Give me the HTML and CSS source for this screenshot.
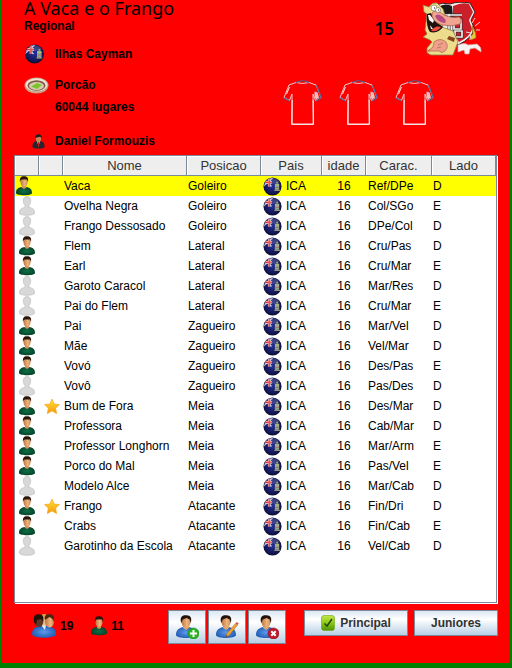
FILE: index.html
```html
<!DOCTYPE html>
<html lang="pt">
<head>
<meta charset="utf-8">
<title>A Vaca e o Frango</title>
<link rel="stylesheet" href="styles.css">
</head>
<body>
<svg class="defs" aria-hidden="true">
  <defs>
    <radialGradient id="navy" cx=".5" cy=".45" r=".55"><stop offset="0" stop-color="#26309a"/><stop offset=".7" stop-color="#15195e"/><stop offset="1" stop-color="#0b0d30"/></radialGradient>
    <radialGradient id="green"><stop offset="0" stop-color="#0f7048"/><stop offset="1" stop-color="#06462a"/></radialGradient>
    <radialGradient id="blue"><stop offset="0" stop-color="#5b9bea"/><stop offset="1" stop-color="#2560b8"/></radialGradient>
    <linearGradient id="lime" x2="0" y2="1"><stop offset="0" stop-color="#c3e84a"/><stop offset=".5" stop-color="#8cc818"/><stop offset="1" stop-color="#4e9408"/></linearGradient>
    <linearGradient id="gold" x2="0" y2="1"><stop offset="0" stop-color="#ffe23c"/><stop offset="1" stop-color="#f79a08"/></linearGradient>
    <linearGradient id="skin" x2="1" y2="0"><stop offset="0" stop-color="#b87442"/><stop offset=".6" stop-color="#f0b57c"/><stop offset="1" stop-color="#c98a55"/></linearGradient>
    <clipPath id="disc"><circle cx="10" cy="10" r="9"/></clipPath>
    <symbol id="flag" viewBox="0 0 20 20">
      <circle cx="10" cy="10" r="9.5" fill="url(#navy)"/>
      <g clip-path="url(#disc)">
        <path d="M1 2l8 8M10 1L0 10" stroke="#b9bddd" stroke-width="1.500"/>
        <path d="M0 5.500h9.500M6.500 0v10" stroke="#f4dede" stroke-width="2.600"/>
        <path d="M0 5.500h9.500M6.500 1v9" stroke="#e03030" stroke-width="1.400"/>
        <path d="M12.500 7h4.500v6.500h-4.500z" fill="#86ab98"/>
        <path d="M13 8.500h4M12 14h6" stroke="#c9b770"/>
        <path d="M13 11h4" stroke="#b96a5c"/>
        <path d="M14 5h2v2h-2z" fill="#8f9a6c"/>
        <ellipse cx="10" cy="4" rx="7" ry="3" fill="#fff" opacity=".16"/>
      </g>
    </symbol>
    <symbol id="player" viewBox="0 0 16 20">
      <path d="M0 17c0-4 2-5 5-6l3 1 3-1c3 1 5 2 5 6 0 3-16 3-16 0z" fill="url(#green)"/>
      <path d="M6 8h4v4l-2 1-2-1z" fill="#d09058"/>
      <ellipse cx="8" cy="6" rx="3.5" ry="4.6" fill="url(#skin)"/>
      <path d="M4 6C3.400 2 5 0 8 .2c3.500-.2 4.700 2 4 5.800l-1-2.500H6L4.800 4z" fill="#2a160c"/>
    </symbol>
    <symbol id="ghost" viewBox="0 0 16 20">
      <path d="M.5 17c0-4 2-5 5.500-5.500V9.500C3.500 7 3.500.5 8 .5s4.500 6.500 2 9v2c3.500.5 5.500 1.500 5.500 5.500 0 3-15 3-15 0z" fill="#d8d8d8" stroke="#bdbdbd" stroke-width=".7"/>
    </symbol>
    <symbol id="star" viewBox="0 0 16 16">
      <path d="M8 .6l2.200 4.900 5.300.6-3.900 3.600 1 5.400L8 12.400l-4.700 2.700 1-5.400L.5 6.100l5.300-.6z" fill="url(#gold)" stroke="#f0a010" stroke-width=".6"/>
    </symbol>
    <symbol id="person" viewBox="0 0 24 24">
      <path d="M1 20c0-5 3-7 7-8l3 2 3-2c4 1 7 3 7 8 0 4-20 4-20 0z" fill="url(#blue)"/>
      <path d="M8 9h6v4l-3 2-3-2z" fill="#e0a470"/>
      <ellipse cx="11" cy="7" rx="4.500" ry="5.500" fill="url(#skin)"/>
      <path d="M6.300 8C4.500 2.500 7 0 11 .3 15.500 0 17.300 3 15.700 8l-1-3.500-3-1.500-4 1.500z" fill="#24130b"/>
    </symbol>
    <symbol id="shirt" viewBox="0 0 39 46">
      <path d="M13 2.500L6 5 1 17.500l5.500 3L9 14v7L8.500 44.500h22L30 21v-7l2.500 6.500 5.500-3L33 5l-7-2.500q-6.500 2-13 0z" fill="#f00" stroke="#e9c9cc" stroke-width="1"/>
      <path d="M13 2.500q6.500-3.500 13 0M.8 18L6.500 21M33.500 5.500l4.800 12-5 3.500" fill="none" stroke="#4a5f96" stroke-width="1.200"/>
      <path d="M31.500 11.500l3 1 1.500 5-3 2-1.500-3z" fill="#eee0e2" opacity=".85"/>
      <path d="M9.200 20v24h21V20M6.500 7l-3 7" fill="none" stroke="#fff" stroke-width=".9"/>
    </symbol>
  </defs>
</svg>

<header class="club">
  <div class="info">
    <h1>A Vaca e o Frango</h1>
    <p class="line">Regional</p>
    <p class="line country"><span class="ico"><svg width="21" height="20"><use href="#flag"/></svg></span>Ilhas Cayman</p>
    <p class="line stadium"><span class="ico"><svg width="25" height="17" viewBox="0 0 25 17"><ellipse cx="12.500" cy="8.500" rx="12" ry="8" fill="#c9a287"/><ellipse cx="12.500" cy="7.800" rx="11" ry="6.500" fill="#f2e4d4"/><ellipse cx="12.500" cy="8.500" rx="9" ry="5.200" fill="#7b5e48"/><ellipse cx="12.500" cy="9" rx="7.500" ry="4" fill="#d9cbb2"/><path d="M7 9.500l6-3.500 5 2-5 4z" fill="#79c52a"/></svg></span>Porcão</p>
    <p class="line seats"><span class="ico"></span>60044 lugares</p>
    <p class="line manager"><span class="ico centered"><svg width="13" height="15" viewBox="0 0 13 15"><path d="M.5 13c0-4 1-5 4-6h4c3 1 4 2 4 6 0 2-12 2-12 0z" fill="#26262c"/><path d="M5 7h3l-1.500 5z" fill="#eee"/><path d="M6 8h1v5H6z" fill="#b22"/><ellipse cx="6.500" cy="4.500" rx="2.600" ry="3.500" fill="#c98558"/><path d="M3 4c0-5 7-5 7 0L8 2.800z" fill="#1c1c22"/></svg></span>Daniel Formouzis</p>
  </div>
  <div class="side">
    <div class="rank">
      <span class="pos">15</span>
      <svg width="61" height="54" viewBox="0 0 61 54" role="img" aria-label="Escudo">
        <path d="M14 3q6-3 14-1 8-3 20-1l5 9-4 8 3 8q-1 10-16 17Q20 36 18 20z" fill="#f4f0f0" stroke="#2b2325"/>
        <path d="M18 4q6-3 12 0l1 11-8-1z" fill="#1b1819"/>
        <path d="M31 4q9-4 16-2l4 8-4 8 3 9q-2 8-13 13-6-8-6-15z" fill="#cb1f29"/>
        <path d="M22 13h18M27 12v21h6M32 18h7v9h-7zM33 29h7v6h-7z" fill="none" stroke="#353032" stroke-width="3"/>
        <path d="M22 13h18M27 12v21h6M32 18h7v9h-7zM33 29h7v6h-7z" fill="none" stroke="#f0eded" stroke-width="1.700"/>
        <path d="M7 5l-6-2 1 7 3 2-2 16 2 4-4 3 7 3 2 2-5 6v5l4 2h22l5-13-5-11-11-4 4-9-3-9-6-6q-5-1-8 4z" fill="#ecdc8c" stroke="#8a7a46" stroke-width=".8"/>
        <path d="M5 12q-1 13 3 18 8 2 13-5l-8-6-4-8z" fill="#21100e"/>
        <path d="M6 13l1 5 4 3 1-3-4-5zM9 27l-1-4 3 4z" fill="#fff"/>
        <path d="M9 29q4-6 10-4-3 5-10 4z" fill="#ee4d3f"/>
        <path d="M10 11q4-5 12 2 8 4 15 2 4 3 1 7-8 3-18 1Q9 19 10 11z" fill="#efa58f" stroke="#a96354" stroke-width=".8"/>
        <path d="M13 14q3-4 9 2 3 3 1 5-7 0-10-7z" fill="#b74a83"/>
        <ellipse cx="12" cy="6" rx="3" ry="3" fill="#fff" stroke="#665" stroke-width=".6"/><ellipse cx="16" cy="8" rx="2.500" ry="2.500" fill="#fff" stroke="#665" stroke-width=".6"/>
        <path d="M12 6h1M16 8h1" stroke="#111"/>
        <path d="M12 40q6-5 12 0 3 5-1 9-3 3-6 0H6l5-4z" fill="#f0a08a" stroke="#b06c5a" stroke-width=".8"/>
        <path d="M16 43l5-2M15 46l4-1M8 47l-3 4" stroke="#b06c5a" stroke-width=".8"/>
        <path d="M27 34l6 2-1 4-7-3z" fill="#84451a"/>
        <path d="M36 43q7-3 10 0l9-1q5 3 4 8l-6-4-5 1-1 5h-4l-1-4-6 2z" fill="#f8f2f0" stroke="#cda7a3" stroke-width=".7"/>
        <path d="M50 24q5 7 4 12l-5 2-1-3 3-3z" fill="#e5cb3c" stroke="#8a6419" stroke-width=".7"/>
        <path d="M50 21l3-5M53 24l5-4M54 28l4 0M44 30l5 1-1 7" fill="none" stroke="#e8d8d8"/>
      </svg>
    </div>
    <div class="kits">
      <svg width="39" height="46"><use href="#shirt"/></svg>
      <svg width="39" height="46"><use href="#shirt"/></svg>
      <svg width="39" height="46"><use href="#shirt"/></svg>
    </div>
  </div>
</header>

<main class="panel">
  <table>
    <colgroup><col class="c-icon"><col class="c-icon"><col><col class="c-pos"><col class="c-country"><col class="c-age"><col class="c-traits"><col class="c-side"></colgroup>
    <thead>
      <tr><th></th><th></th><th>Nome</th><th>Posicao</th><th>Pais</th><th>idade</th><th>Carac.</th><th>Lado</th></tr>
    </thead>
    <tbody>
      <tr class="selected"><td><svg><use href="#player"/></svg></td><td></td><td>Vaca</td><td>Goleiro</td><td><span class="nat"><svg><use href="#flag"/></svg>ICA</span></td><td>16</td><td>Ref/DPe</td><td>D</td></tr>
      <tr><td><svg><use href="#ghost"/></svg></td><td></td><td>Ovelha Negra</td><td>Goleiro</td><td><span class="nat"><svg><use href="#flag"/></svg>ICA</span></td><td>16</td><td>Col/SGo</td><td>E</td></tr>
      <tr><td><svg><use href="#ghost"/></svg></td><td></td><td>Frango Dessosado</td><td>Goleiro</td><td><span class="nat"><svg><use href="#flag"/></svg>ICA</span></td><td>16</td><td>DPe/Col</td><td>D</td></tr>
      <tr><td><svg><use href="#player"/></svg></td><td></td><td>Flem</td><td>Lateral</td><td><span class="nat"><svg><use href="#flag"/></svg>ICA</span></td><td>16</td><td>Cru/Pas</td><td>D</td></tr>
      <tr><td><svg><use href="#player"/></svg></td><td></td><td>Earl</td><td>Lateral</td><td><span class="nat"><svg><use href="#flag"/></svg>ICA</span></td><td>16</td><td>Cru/Mar</td><td>E</td></tr>
      <tr><td><svg><use href="#ghost"/></svg></td><td></td><td>Garoto Caracol</td><td>Lateral</td><td><span class="nat"><svg><use href="#flag"/></svg>ICA</span></td><td>16</td><td>Mar/Res</td><td>D</td></tr>
      <tr><td><svg><use href="#ghost"/></svg></td><td></td><td>Pai do Flem</td><td>Lateral</td><td><span class="nat"><svg><use href="#flag"/></svg>ICA</span></td><td>16</td><td>Cru/Mar</td><td>E</td></tr>
      <tr><td><svg><use href="#player"/></svg></td><td></td><td>Pai</td><td>Zagueiro</td><td><span class="nat"><svg><use href="#flag"/></svg>ICA</span></td><td>16</td><td>Mar/Vel</td><td>D</td></tr>
      <tr><td><svg><use href="#player"/></svg></td><td></td><td>Mãe</td><td>Zagueiro</td><td><span class="nat"><svg><use href="#flag"/></svg>ICA</span></td><td>16</td><td>Vel/Mar</td><td>D</td></tr>
      <tr><td><svg><use href="#player"/></svg></td><td></td><td>Vovó</td><td>Zagueiro</td><td><span class="nat"><svg><use href="#flag"/></svg>ICA</span></td><td>16</td><td>Des/Pas</td><td>E</td></tr>
      <tr><td><svg><use href="#ghost"/></svg></td><td></td><td>Vovô</td><td>Zagueiro</td><td><span class="nat"><svg><use href="#flag"/></svg>ICA</span></td><td>16</td><td>Pas/Des</td><td>D</td></tr>
      <tr><td><svg><use href="#player"/></svg></td><td><svg><use href="#star"/></svg></td><td>Bum de Fora</td><td>Meia</td><td><span class="nat"><svg><use href="#flag"/></svg>ICA</span></td><td>16</td><td>Des/Mar</td><td>D</td></tr>
      <tr><td><svg><use href="#player"/></svg></td><td></td><td>Professora</td><td>Meia</td><td><span class="nat"><svg><use href="#flag"/></svg>ICA</span></td><td>16</td><td>Cab/Mar</td><td>D</td></tr>
      <tr><td><svg><use href="#player"/></svg></td><td></td><td>Professor Longhorn</td><td>Meia</td><td><span class="nat"><svg><use href="#flag"/></svg>ICA</span></td><td>16</td><td>Mar/Arm</td><td>E</td></tr>
      <tr><td><svg><use href="#player"/></svg></td><td></td><td>Porco do Mal</td><td>Meia</td><td><span class="nat"><svg><use href="#flag"/></svg>ICA</span></td><td>16</td><td>Pas/Vel</td><td>E</td></tr>
      <tr><td><svg><use href="#ghost"/></svg></td><td></td><td>Modelo Alce</td><td>Meia</td><td><span class="nat"><svg><use href="#flag"/></svg>ICA</span></td><td>16</td><td>Mar/Cab</td><td>D</td></tr>
      <tr><td><svg><use href="#player"/></svg></td><td><svg><use href="#star"/></svg></td><td>Frango</td><td>Atacante</td><td><span class="nat"><svg><use href="#flag"/></svg>ICA</span></td><td>16</td><td>Fin/Dri</td><td>D</td></tr>
      <tr><td><svg><use href="#player"/></svg></td><td></td><td>Crabs</td><td>Atacante</td><td><span class="nat"><svg><use href="#flag"/></svg>ICA</span></td><td>16</td><td>Fin/Cab</td><td>E</td></tr>
      <tr><td><svg><use href="#ghost"/></svg></td><td></td><td>Garotinho da Escola</td><td>Atacante</td><td><span class="nat"><svg><use href="#flag"/></svg>ICA</span></td><td>16</td><td>Vel/Cab</td><td>D</td></tr>
    </tbody>
  </table>
</main>

<footer>
  <div class="counts">
    <span class="count"><svg width="24" height="24" viewBox="0 0 24 24"><path d="M0 20c0-5 3-7 7-8h9c5 1 8 3 8 8 0 5-24 5-24 0z" fill="url(#blue)"/><path d="M9 11h5l-1 5z" fill="#dcebff"/><ellipse cx="12" cy="6" rx="4" ry="5.500" fill="#f0c08a"/><path d="M8 3c2-4 7-4 8 0l-3 2z" fill="#dca044"/><ellipse cx="7" cy="7" rx="4.500" ry="6" fill="#5e3824"/><path d="M2 8C1 2 3 0 7 .3c4 0 5 3 4 7L9 5 5 6 4 11z" fill="#21110b"/><ellipse cx="17.500" cy="7.500" rx="4.500" ry="6" fill="url(#skin)"/><path d="M13 6c-1-4 1-6 4-5.700C21 0 23 2 21.500 8l-1-3-3-2z" fill="#4a2612"/></svg>19</span>
    <span class="count"><svg width="16" height="20"><use href="#player"/></svg>11</span>
  </div>
  <div class="tools">
    <button class="tool" type="button" aria-label="Adicionar"><svg viewBox="0 0 24 24"><use href="#person" width="24" height="24"/><circle cx="18.500" cy="18.500" r="5.500" fill="#27b51d" stroke="#1c8a18" stroke-width=".6"/><path d="M18.500 15v7M15 18.500h7" stroke="#fff" stroke-width="2"/></svg></button>
    <button class="tool" type="button" aria-label="Editar"><svg viewBox="0 0 24 24"><use href="#person" width="24" height="24"/><path d="M11 22l1-3.500 8.500-10 2 1.500-8.500 10.500z" fill="#f3a52b" stroke="#a86412" stroke-width=".5"/><path d="M20.500 8.500l1.200-1.500 2 1.600-1.200 1.400z" fill="#d9534a"/><path d="M11 22l.5-1.700 1 .8z" fill="#222"/></svg></button>
    <button class="tool" type="button" aria-label="Remover"><svg viewBox="0 0 24 24"><use href="#person" width="24" height="24"/><circle cx="18.500" cy="18.500" r="5.500" fill="#c0182a" stroke="#8b101c" stroke-width=".6"/><path d="M16.300 16.300l4.400 4.400M20.700 16.300l-4.400 4.400" stroke="#fff" stroke-width="2"/></svg></button>
  </div>
  <div class="views">
    <button class="view main" type="button"><svg width="14" height="16" viewBox="0 0 14 16"><rect x=".5" y=".5" width="13" height="15" rx="2.500" fill="url(#lime)" stroke="#6aa516" stroke-width=".6"/><path d="M3.500 8.500L6 11l5-7" fill="none" stroke="#25470a" stroke-width="1.500"/></svg>Principal</button>
    <button class="view" type="button">Juniores</button>
  </div>
</footer>
</body>
</html>
```
FILE: styles.css
```css
* {
  box-sizing: border-box;
}

body {
  display: flex;
  flex-direction: column;
  min-height: 100vh;
  margin: 0;
  border: solid #008000;
  border-width: 0 2px 5px;
  background: #f00;
  color: #000;
  font: 12px/20px "Liberation Sans", Arial, sans-serif;
}

.defs {
  position: absolute;
  width: 0;
  height: 0;
}

svg {
  display: block;
  flex: none;
}

.club {
  display: flex;
  justify-content: space-between;
  padding: 0 27px 4px 22px;
  font-weight: bold;
}

h1 {
  margin: 0;
  font: 18px/16px "Noto Sans", sans-serif;
}

.line {
  display: flex;
  align-items: center;
  height: 20px;
  margin: 0;
}

.ico {
  width: 31px;
}

.ico.centered {
  padding-left: 8px;
}

.country {
  margin-top: 8px;
}

.stadium {
  margin-top: 11px;
}

.seats {
  margin-top: 2px;
}

.manager {
  margin-top: 14px;
}

.side {
  width: 200px;
}

.rank {
  display: flex;
  justify-content: flex-end;
  align-items: center;
  gap: 28px;
  padding-top: 2px;
}

.pos {
  font: 600 17px/20px "Noto Sans", sans-serif;
}

.kits {
  display: flex;
  gap: 17px;
  margin-top: 24px;
}

.panel {
  flex: 1;
  margin: 0 13px 0 12px;
  border: 1px solid #7a8a99;
  background: #fff;
  box-shadow: 1px 1px #fff;
}

table {
  width: 100%;
  table-layout: fixed;
  border-collapse: separate;
  border-spacing: 0;
}

.c-icon {
  width: 24px;
}

.c-pos {
  width: 74px;
}

.c-country {
  width: 61px;
}

.c-age {
  width: 44px;
}

.c-traits {
  width: 66px;
}

.c-side {
  width: 64px;
}

th,
td {
  height: 20px;
  padding: 1px 1px 0;
  line-height: 19px;
  text-align: left;
  white-space: nowrap;
}

th {
  border: solid #7a8a99;
  border-width: 0 1px 1px 0;
  background: #eee;
  box-shadow: inset 1px 1px #fff;
  color: #333;
  font-size: 13px;
  font-weight: normal;
  line-height: 18px;
  text-align: center;
}

td svg {
  width: 16px;
  height: 19px;
}

td:first-child {
  padding: 0 0 0 4px;
}

td:first-child svg {
  height: 20px;
}

.selected td:first-child {
  padding-left: 1px;
}

td:nth-child(2) {
  padding-left: 5px;
}

td:nth-child(6) {
  text-align: center;
}

td:nth-child(7),
td:nth-child(5) {
  padding-left: 2px;
}

.selected {
  background: #ff0;
}

.nat {
  display: flex;
  gap: 4px;
}

.nat svg {
  width: 19px;
}

footer {
  display: flex;
  align-items: flex-start;
  justify-content: space-between;
  padding: 7px 12px 19px 30px;
  font-weight: bold;
}

.counts,
.count,
.tools,
.views {
  display: flex;
  align-items: center;
}

.counts {
  gap: 18px;
  height: 32px;
}

.count {
  gap: 4px;
}

.tools {
  gap: 2px;
  margin-left: 26px;
}

.views {
  gap: 6px;
}

button {
  display: flex;
  align-items: center;
  justify-content: center;
  gap: 5px;
  padding: 0;
  border: 1px solid #7a8a99;
  background: linear-gradient(#dde8f3, #fff 35%, #b8cfe5);
  color: #333;
  font: inherit;
}

.tool {
  width: 38px;
  height: 34px;
}

.tool svg {
  width: 24px;
  height: 24px;
}

.view {
  width: 84px;
  height: 26px;
}

.view.main {
  width: 104px;
}
```
